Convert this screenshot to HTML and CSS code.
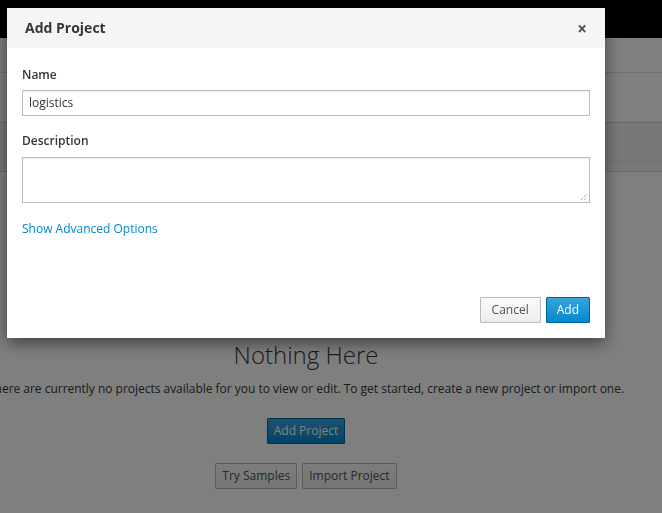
FILE: index.html
```html
<!DOCTYPE html>
<html>
<head>
<meta charset="utf-8">
<link rel="stylesheet" href="styles.css">
</head>
<body>
<div class="page">
  <header class="topbar"></header>
  <div class="subbar"></div>
  <div class="toolbar"></div>
  <div class="filterbar"><div class="filter-inner"></div></div>
  <main class="empty">
    <h1 class="empty-title">Nothing Here</h1>
    <p class="empty-text">There are currently no projects available for you to view or edit. To get started, create a new project or import one.</p>
    <div class="empty-primary"><button class="btn btn-primary btn-lg">Add Project</button></div>
    <div class="empty-secondary">
      <button class="btn btn-default">Try Samples</button>
      <button class="btn btn-default">Import Project</button>
    </div>
  </main>
</div>
<div class="backdrop"></div>
<div class="modal">
  <div class="modal-header">
    <h4 class="modal-title">Add Project</h4>
    <span class="modal-close">&#215;</span>
  </div>
  <div class="modal-body">
    <label class="field-label">Name</label>
    <div class="input">logistics</div>
    <label class="field-label field-label-2">Description</label>
    <div class="textarea">
      <svg class="grip" width="8" height="8" viewBox="0 0 8 8"><path d="M1 7L7 1M4 7L7 4" stroke="#888" stroke-width="1" stroke-dasharray="1 1"/></svg>
    </div>
    <a class="adv-link">Show Advanced Options</a>
  </div>
  <div class="modal-footer">
    <button class="btn btn-default btn-modal btn-cancel">Cancel</button>
    <button class="btn btn-primary btn-modal">Add</button>
  </div>
</div>
</body>
</html>
```

FILE: styles.css
```css
html, body {
  margin: 0;
  padding: 0;
  width: 662px;
  height: 513px;
  overflow: hidden;
  background: #fff;
  font-family: "Open Sans", "Noto Sans", sans-serif;
  color: #363636;
}
.page {
  display: flex;
  flex-direction: column;
  height: 513px;
}
.topbar {
  height: 38px;
  background: #000;
  flex: none;
}
.subbar {
  height: 34px;
  background: #fff;
  border-bottom: 1px solid #ddd;
  flex: none;
}
.toolbar {
  height: 49px;
  background: #fff;
  border-bottom: 1px solid #d1d1d1;
  flex: none;
}
.filterbar {
  height: 48px;
  background: #f0f0f0;
  border-bottom: 1px solid #d1d1d1;
  flex: none;
  display: flex;
  flex-direction: column;
}
.filter-inner {
  height: 37px;
  border-bottom: 1px solid #e4e4e4;
}
.empty {
  display: flex;
  flex-direction: column;
  align-items: center;
  width: 612px;
  margin-top: 168px;
}
.empty-title {
  font-weight: 300;
  font-size: 24px;
  line-height: 30px;
  margin: 0;
  color: #363636;
  white-space: nowrap;
}
.empty-text {
  font-size: 12px;
  line-height: 18px;
  margin: 10px 0 0;
  white-space: nowrap;
  color: #363636;
  letter-spacing: -0.02px;
}
.empty-primary {
  margin-top: 20px;
}
.empty-secondary {
  margin-top: 19px;
  display: flex;
  gap: 5px;
}
.btn {
  font-family: "Open Sans", "Noto Sans", sans-serif;
  font-size: 12px;
  line-height: 18px;
  padding: 3px 6px;
  border-radius: 1px;
  border: 1px solid #bbb;
  cursor: pointer;
  box-sizing: border-box;
  height: 26px;
}
.btn-default {
  background: linear-gradient(#fafafa, #ededed);
  color: #4d5258;
  border-color: #bbb;
}
.btn-primary {
  background: linear-gradient(#39a5dc, #0088ce);
  color: #fff;
  border-color: #00659c;
}
.backdrop {
  position: fixed;
  inset: 0;
  background: rgba(0, 0, 0, 0.5);
}
.modal {
  position: fixed;
  left: 7px;
  top: 8px;
  width: 598px;
  height: 330px;
  background: #fff;
  box-shadow: 0 5px 15px rgba(0, 0, 0, 0.5);
  display: flex;
  flex-direction: column;
}
.modal-header {
  height: 40px;
  background: #f5f5f5;
  display: flex;
  align-items: center;
  justify-content: space-between;
  padding: 0 18px 0 18px;
  flex: none;
}
.modal-title {
  margin: 0;
  font-size: 14px;
  font-weight: 700;
  color: #363636;
  line-height: 20px;
}
.modal-close {
  font-size: 17px;
  font-weight: 700;
  color: #4d5258;
  line-height: 20px;
  margin-top: 1px;
}
.modal-body {
  padding: 18px 15px 0;
  display: flex;
  flex-direction: column;
  flex: 1;
}
.field-label {
  font-size: 12px;
  font-weight: 600;
  line-height: 18px;
  color: #363636;
}
.field-label-2 {
  margin-top: 16px;
}
.input {
  margin-top: 6px;
  height: 26px;
  box-sizing: border-box;
  border: 1px solid #bbb;
  box-shadow: inset 0 1px 1px rgba(3, 3, 3, 0.075);
  font-size: 12px;
  line-height: 24px;
  padding: 0 6px;
  color: #363636;
}
.textarea {
  margin-top: 7px;
  height: 46px;
  box-sizing: border-box;
  border: 1px solid #bbb;
  box-shadow: inset 0 1px 1px rgba(3, 3, 3, 0.075);
  position: relative;
}
.grip {
  position: absolute;
  right: 1px;
  bottom: 1px;
}
.adv-link {
  margin-top: 17px;
  font-size: 12px;
  line-height: 18px;
  color: #0088ce;
  align-self: flex-start;
}
.modal-footer {
  display: flex;
  justify-content: flex-end;
  gap: 5px;
  padding: 0 15px 15px;
  flex: none;
}
.btn-modal {
  padding: 3px 10px;
}
.btn-cancel {
  padding: 3px 11px;
}
```
